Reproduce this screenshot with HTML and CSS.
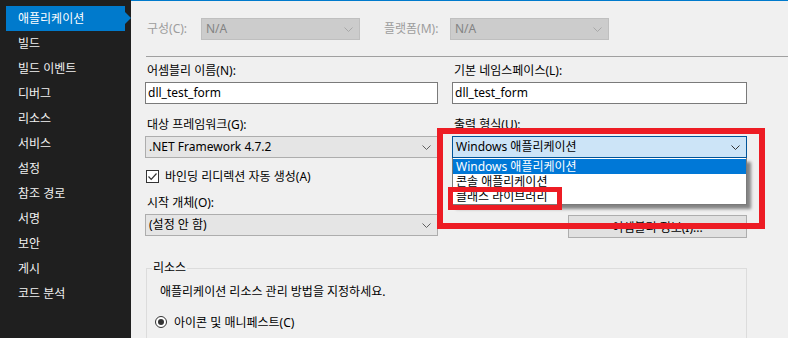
FILE: index.html
```html
<!DOCTYPE html>
<html>
<head>
    <meta charset="UTF-8">
    <title>프로젝트 속성</title>
    <link rel="stylesheet" href="styles.css">
</head>
<body>
    <div class="window">
        <nav class="sidebar">
            <div class="nav-item active">애플리케이션</div>
            <div class="nav-item">빌드</div>
            <div class="nav-item">빌드 이벤트</div>
            <div class="nav-item">디버그</div>
            <div class="nav-item">리소스</div>
            <div class="nav-item">서비스</div>
            <div class="nav-item">설정</div>
            <div class="nav-item">참조 경로</div>
            <div class="nav-item">서명</div>
            <div class="nav-item">보안</div>
            <div class="nav-item">게시</div>
            <div class="nav-item">코드 분석</div>
        </nav>

        <main class="page">
            <div class="config-row">
                <span class="cfg-label">구성(C):</span>
                <div class="combo disabled">N/A
                    <svg class="chev" width="9" height="5" viewBox="0 0 9 5"><polyline points="0.5,0.5 4.5,4.5 8.5,0.5"/></svg>
                </div>
                <span class="cfg-label platform">플랫폼(M):</span>
                <div class="combo disabled">N/A
                    <svg class="chev" width="9" height="5" viewBox="0 0 9 5"><polyline points="0.5,0.5 4.5,4.5 8.5,0.5"/></svg>
                </div>
            </div>

            <div class="separator"></div>

            <div class="form-grid">
                <div class="col">
                    <div class="field-label">어셈블리 이름(N):</div>
                    <div class="textbox">dll_test_form</div>

                    <div class="field-label spaced">대상 프레임워크(G):</div>
                    <div class="combo">.NET Framework 4.7.2
                        <svg class="chev" width="9" height="5" viewBox="0 0 9 5"><polyline points="0.5,0.5 4.5,4.5 8.5,0.5"/></svg>
                    </div>

                    <div class="check-row">
                        <span class="checkbox">
                            <svg width="11" height="11" viewBox="0 0 11 11"><polyline points="1.5,5.5 4.2,8.3 9.5,2.5"/></svg>
                        </span>
                        바인딩 리디렉션 자동 생성(A)
                    </div>

                    <div class="field-label startup">시작 개체(O):</div>
                    <div class="combo">(설정 안 함)
                        <svg class="chev" width="9" height="5" viewBox="0 0 9 5"><polyline points="0.5,0.5 4.5,4.5 8.5,0.5"/></svg>
                    </div>
                </div>

                <div class="col">
                    <div class="field-label">기본 네임스페이스(L):</div>
                    <div class="textbox">dll_test_form</div>

                    <div class="field-label spaced">출력 형식(U):</div>
                    <div class="combo-wrap">
                        <div class="combo open">Windows 애플리케이션
                            <svg class="chev" width="9" height="5" viewBox="0 0 9 5"><polyline points="0.5,0.5 4.5,4.5 8.5,0.5"/></svg>
                        </div>
                        <ul class="dropdown">
                            <li class="selected">Windows 애플리케이션</li>
                            <li>콘솔 애플리케이션</li>
                            <li>클래스 라이브러리</li>
                        </ul>
                    </div>

                    <button class="btn">어셈블리 정보(I)...</button>
                </div>

                <fieldset class="group">
                    <legend>리소스</legend>
                    <div class="group-text">애플리케이션 리소스 관리 방법을 지정하세요.</div>
                    <div class="radio-row">
                        <span class="radio"></span>
                        아이콘 및 매니페스트(C)
                    </div>
                </fieldset>
            </div>

            <div class="annot annot-outer"></div>
            <div class="annot annot-inner"></div>
        </main>
    </div>
</body>
</html>
```

FILE: styles.css
```css
body {
    margin: 0;
    padding: 0;
    font-family: "Noto Sans", "Noto Sans CJK KR", sans-serif;
    font-size: 12px;
    color: #000;
    background: #f0f0f0;
    overflow: hidden;
}

.window {
    display: flex;
    height: 338px;
    overflow: hidden;
}

/* left navigation */
.sidebar {
    width: 131px;
    flex-shrink: 0;
    background: #1f1f1f;
    padding: 6px 0 0 6px;
    box-sizing: border-box;
}

.nav-item {
    position: relative;
    width: 119px;
    height: 25px;
    line-height: 25px;
    padding-left: 12px;
    box-sizing: border-box;
    color: #f1f1f1;
    font-size: 12px;
}

.nav-item.active {
    background: #007acc;
    color: #fff;
}

.nav-item.active::after {
    content: "";
    position: absolute;
    left: 100%;
    top: 6px;
    border-left: 6px solid #007acc;
    border-top: 6px solid transparent;
    border-bottom: 6px solid transparent;
}

/* main page */
.page {
    position: relative;
    flex: 1;
    border-top: 1px solid #007acc;
    padding-left: 14px;
}

.config-row {
    display: flex;
    align-items: center;
    margin-top: 17px;
    height: 22px;
}

.cfg-label {
    width: 56px;
    padding-left: 2px;
    box-sizing: border-box;
    color: #9d9d9d;
    line-height: 16px;
}

.cfg-label.platform {
    width: 68px;
    margin-left: 22px;
}

.config-row .combo {
    width: 159px;
}

.separator {
    height: 1px;
    background: #a0a0a0;
    margin: 16px 0 0 1px;
}

.form-grid {
    display: grid;
    grid-template-columns: 293px 295px;
    column-gap: 14px;
    margin-top: 6px;
}

.col {
    display: flex;
    flex-direction: column;
}

.field-label {
    line-height: 16px;
    height: 16px;
    padding-left: 2px;
    margin-bottom: 3px;
    white-space: nowrap;
}

.field-label.spaced {
    margin-top: 13px;
}

.field-label.startup {
    margin-top: 11px;
}

.textbox {
    height: 22px;
    line-height: 20px;
    border: 1px solid #7a7a7a;
    background: #fff;
    padding-left: 2px;
    box-sizing: border-box;
}

.combo {
    position: relative;
    height: 22px;
    line-height: 20px;
    border: 1px solid #adadad;
    background: #e5e5e5;
    padding-left: 3px;
    box-sizing: border-box;
    white-space: nowrap;
}

.combo .chev {
    position: absolute;
    right: 6px;
    top: 8px;
    fill: none;
    stroke: #606060;
    stroke-width: 1;
}

.combo.disabled {
    background: #cccccc;
    border-color: #bfbfbf;
    color: #838383;
    padding-left: 4px;
}

.combo.disabled .chev {
    stroke: #a8a8a8;
}

.combo.open {
    background: #cce4f7;
    border-color: #005499;
}

.combo.open .chev {
    stroke: #333;
}

.check-row {
    display: flex;
    align-items: center;
    height: 16px;
    margin-top: 10px;
    padding-left: 1px;
    white-space: nowrap;
}

.checkbox {
    width: 13px;
    height: 13px;
    border: 1px solid #333;
    background: #fff;
    box-sizing: border-box;
    margin-right: 6px;
    display: flex;
    align-items: center;
    justify-content: center;
}

.checkbox svg {
    fill: none;
    stroke: #333;
    stroke-width: 1.2;
}

/* open dropdown */
.combo-wrap {
    position: relative;
}

.dropdown {
    position: absolute;
    left: 0;
    top: 22px;
    width: 100%;
    margin: 0;
    padding: 1px 0 0;
    list-style: none;
    background: #fff;
    border: 1px solid #7a7a7a;
    border-top: none;
    box-sizing: border-box;
    box-shadow: 4px 4px 3px rgba(0, 0, 0, 0.45);
    z-index: 2;
}

.dropdown li {
    height: 15px;
    line-height: 16px;
    padding-left: 3px;
    white-space: nowrap;
}

.dropdown li.selected {
    background: #0078d7;
    color: #fff;
}

.btn {
    align-self: flex-end;
    width: 179px;
    height: 23px;
    margin-top: 57px;
    border: 1px solid #adadad;
    background: #e1e1e1;
    font-family: inherit;
    font-size: 12px;
    color: #000;
    padding: 0;
}

/* resources group */
.group {
    grid-column: 1 / -1;
    margin: 22px 0 0 1px;
    padding: 0;
    min-height: 110px;
    border: 1px solid #dcdcdc;
}

.group legend {
    margin-left: 5px;
    padding: 0 1px;
    line-height: 16px;
}

.group-text {
    margin: 8px 0 0 13px;
    line-height: 16px;
}

.radio-row {
    display: flex;
    align-items: center;
    height: 16px;
    margin: 14px 0 0 8px;
}

.radio {
    width: 12px;
    height: 12px;
    border: 1px solid #333;
    border-radius: 50%;
    box-sizing: border-box;
    background: #fff;
    margin-right: 7px;
    display: flex;
    align-items: center;
    justify-content: center;
}

.radio::after {
    content: "";
    width: 6px;
    height: 6px;
    border-radius: 50%;
    background: #333;
}

/* red highlight annotations */
.annot {
    position: absolute;
    border-style: solid;
    border-color: #ed1c24;
    box-sizing: border-box;
    z-index: 3;
}

.annot-outer {
    left: 306px;
    top: 127px;
    width: 328px;
    height: 101px;
    border-width: 6px;
}

.annot-inner {
    left: 317px;
    top: 186px;
    width: 114px;
    height: 23px;
    border-width: 5px;
}
```
